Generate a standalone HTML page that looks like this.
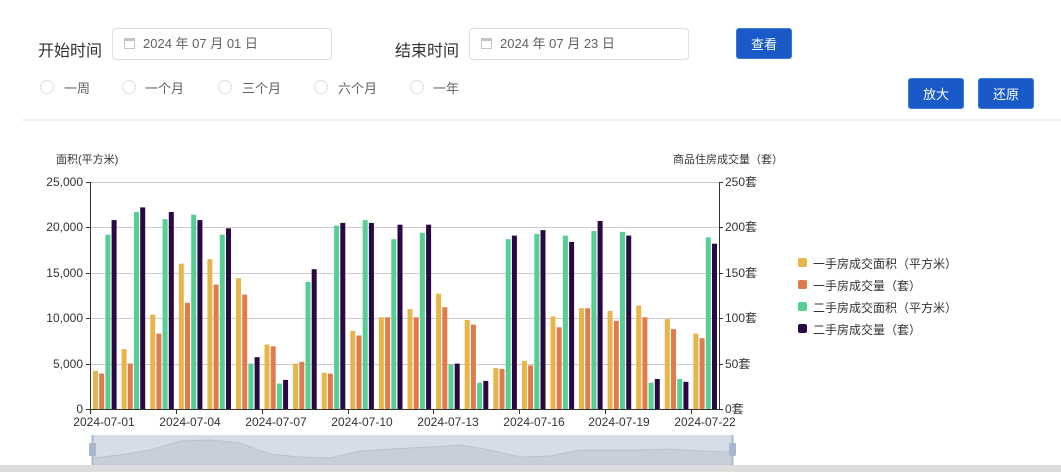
<!DOCTYPE html>
<html><head><meta charset="utf-8"><style>
*{margin:0;padding:0;box-sizing:border-box}
body{width:1061px;height:472px;overflow:hidden;background:#fff;font-family:"Liberation Sans","Noto Sans CJK SC",sans-serif;position:relative;color:#333}
.a{position:absolute}
.lbl{font-size:16px;color:#303133}
.inp{border:1px solid #dcdfe6;border-radius:4px;height:32px;width:220px;font-size:13px;color:#606266;padding-left:30px;line-height:30px}
.cal{position:absolute;left:11px;top:9px;width:11px;height:11px;border:1px solid #c0c4cc;border-top-width:3px}
.btn{background:#1a5ac8;color:#fff;border-radius:3px;font-size:13px;text-align:center;line-height:31px;height:31px;width:56px;border:1px solid #3f7ad6}
.rad{width:14px;height:14px;border:1px solid #dcdfe6;border-radius:50%}
.rt{font-size:13px;color:#606266}
.leg{font-size:12px;color:#333}
.sq{width:9px;height:9px;border-radius:2px}
</style></head><body>
<div class="a lbl" style="left:38px;top:37px">开始时间</div>
<div class="a inp" style="left:112px;top:28px"><span class="cal"></span>2024 年 07 月 01 日</div>
<div class="a lbl" style="left:395px;top:37px">结束时间</div>
<div class="a inp" style="left:469px;top:28px"><span class="cal"></span>2024 年 07 月 23 日</div>
<div class="a btn" style="left:736px;top:28px">查看</div>
<div class="a btn" style="left:908px;top:78px">放大</div>
<div class="a btn" style="left:978px;top:78px">还原</div>
<div class="a rad" style="left:40px;top:80px"></div><div class="a rt" style="left:64px;top:78px">一周</div>
<div class="a rad" style="left:122px;top:80px"></div><div class="a rt" style="left:145px;top:78px">一个月</div>
<div class="a rad" style="left:218px;top:80px"></div><div class="a rt" style="left:242px;top:78px">三个月</div>
<div class="a rad" style="left:314px;top:80px"></div><div class="a rt" style="left:338px;top:78px">六个月</div>
<div class="a rad" style="left:410px;top:80px"></div><div class="a rt" style="left:433px;top:78px">一年</div>
<div class="a" style="left:22px;top:119px;width:1039px;height:2px;background:#f0f0f0"></div>

<svg class="a" style="left:0;top:0" width="1061" height="472" font-family="Liberation Sans,Noto Sans CJK SC,sans-serif">
<g font-size="11" fill="#333">
<text x="56" y="163">面积(平方米)</text>
<text x="783" y="163" text-anchor="end">商品住房成交量（套）</text>
</g>
<g stroke="#ccc" stroke-width="1">
<line x1="90" y1="182.5" x2="719" y2="182.5"/><line x1="90" y1="227.5" x2="719" y2="227.5"/>
<line x1="90" y1="273.5" x2="719" y2="273.5"/><line x1="90" y1="318.5" x2="719" y2="318.5"/>
<line x1="90" y1="364.5" x2="719" y2="364.5"/>
</g>
<g id="bars"></g>
<g stroke="#333" stroke-width="1">
<line x1="90.5" y1="182" x2="90.5" y2="410"/><line x1="719.5" y1="182" x2="719.5" y2="410"/>
<line x1="90" y1="409.5" x2="719" y2="409.5"/>
<line x1="86" y1="182.5" x2="90" y2="182.5"/><line x1="86" y1="227.5" x2="90" y2="227.5"/><line x1="86" y1="273.5" x2="90" y2="273.5"/><line x1="86" y1="318.5" x2="90" y2="318.5"/><line x1="86" y1="364.5" x2="90" y2="364.5"/><line x1="86" y1="409.5" x2="90" y2="409.5"/>
<line x1="719" y1="182.5" x2="723" y2="182.5"/><line x1="719" y1="227.5" x2="723" y2="227.5"/><line x1="719" y1="273.5" x2="723" y2="273.5"/><line x1="719" y1="318.5" x2="723" y2="318.5"/><line x1="719" y1="364.5" x2="723" y2="364.5"/><line x1="719" y1="409.5" x2="723" y2="409.5"/>
<line x1="90.5" y1="409" x2="90.5" y2="414"/><line x1="176.5" y1="409" x2="176.5" y2="414"/><line x1="262.5" y1="409" x2="262.5" y2="414"/><line x1="348.5" y1="409" x2="348.5" y2="414"/><line x1="433.5" y1="409" x2="433.5" y2="414"/><line x1="519.5" y1="409" x2="519.5" y2="414"/><line x1="605.5" y1="409" x2="605.5" y2="414"/><line x1="691.5" y1="409" x2="691.5" y2="414"/>
</g>
<g font-size="12" fill="#333" text-anchor="end">
<text x="83" y="186">25,000</text><text x="83" y="231">20,000</text><text x="83" y="277">15,000</text><text x="83" y="322">10,000</text><text x="83" y="368">5,000</text><text x="83" y="413">0</text>
</g>
<g font-size="12" fill="#333">
<text x="725" y="186">250套</text><text x="725" y="231">200套</text><text x="725" y="277">150套</text><text x="725" y="322">100套</text><text x="725" y="368">50套</text><text x="725" y="413">0套</text>
</g>
<g font-size="12" fill="#333" text-anchor="middle">
<text x="104" y="426">2024-07-01</text><text x="190" y="426">2024-07-04</text><text x="276" y="426">2024-07-07</text><text x="362" y="426">2024-07-10</text><text x="448" y="426">2024-07-13</text><text x="534" y="426">2024-07-16</text><text x="619" y="426">2024-07-19</text><text x="705" y="426">2024-07-22</text>
</g>
<rect x="92" y="435" width="641" height="30" fill="#d7dde8"/>
<path d="M92 458 L120 455 L150 450 L180 441 L210 440 L240 443 L270 454 L300 457 L330 458 L360 451 L390 449 L430 447 L460 445 L490 450 L520 457 L550 456 L580 450 L610 450 L640 450 L670 449 L700 451 L733 452 L733 465 L92 465Z" fill="#c8cfdb" stroke="#b9c3d3"/>
<line x1="92.5" y1="435" x2="92.5" y2="465" stroke="#a9b7cc" stroke-width="2"/>
<line x1="732.5" y1="435" x2="732.5" y2="465" stroke="#a9b7cc" stroke-width="2"/>
<rect x="89" y="443" width="7" height="13" fill="#a9b7cc" rx="1"/><rect x="729" y="443" width="7" height="13" fill="#a9b7cc" rx="1"/>
<rect x="0" y="465" width="1061" height="7" fill="#dcdcdc"/>
</svg>

<div class="a sq" style="left:798px;top:258px;background:#e8b54a"></div><div class="a leg" style="left:813px;top:255px">一手房成交面积（平方米）</div>
<div class="a sq" style="left:798px;top:280px;background:#e07b4e"></div><div class="a leg" style="left:813px;top:277px">一手房成交量（套）</div>
<div class="a sq" style="left:798px;top:302px;background:#55cf93"></div><div class="a leg" style="left:813px;top:299px">二手房成交面积（平方米）</div>
<div class="a sq" style="left:798px;top:324px;background:#2a0845"></div><div class="a leg" style="left:813px;top:321px">二手房成交量（套）</div>

<script>
var d=[[4.2,3.9,19.2,20.8],[6.6,5.0,21.7,22.2],[10.4,8.3,20.9,21.7],[16.0,11.7,21.4,20.8],[16.5,13.7,19.2,19.9],[14.4,12.6,5.0,5.7],[7.1,6.9,2.8,3.2],[5.0,5.2,14.0,15.4],[4.0,3.9,20.2,20.5],[8.6,8.1,20.8,20.5],[10.1,10.1,18.7,20.3],[11.0,10.1,19.4,20.3],[12.7,11.2,4.9,5.0],[9.8,9.3,2.9,3.1],[4.5,4.4,18.7,19.1],[5.3,4.8,19.3,19.7],[10.2,9.0,19.1,18.4],[11.1,11.1,19.6,20.7],[10.8,9.7,19.5,19.1],[11.4,10.1,2.9,3.3],[9.9,8.8,3.3,3.0],[8.3,7.8,18.9,18.2]];
var c=["#e8b54a","#e07b4e","#55cf93","#2a0845"],off=[3,9.2,15.4,21.6],s="",w=629/22;
d.forEach(function(r,i){r.forEach(function(v,j){var h=v*9.08;s+='<rect x="'+(90+i*w+off[j]).toFixed(1)+'" y="'+(409-h).toFixed(1)+'" width="5" height="'+h.toFixed(1)+'" fill="'+c[j]+'"/>';});});
document.getElementById("bars").innerHTML=s;
</script>
</body></html>
